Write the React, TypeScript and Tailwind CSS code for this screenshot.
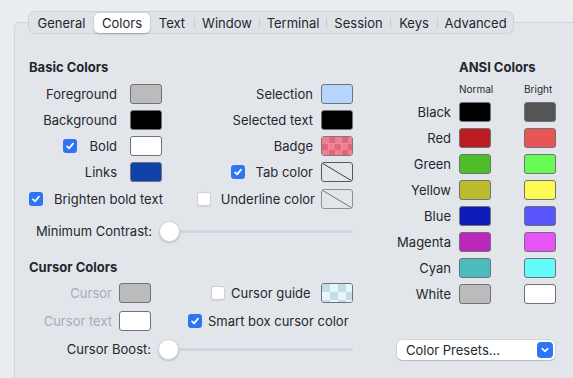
import React from "react";

const FONT = { fontFamily: "Inter, 'Noto Sans', sans-serif" };

function Check({ on }: { on: boolean }) {
  if (on) {
    return (
      <span className="flex h-[14px] w-[14px] shrink-0 items-center justify-center rounded-[3px] bg-[#2f74f2]">
        <svg width="10" height="10" viewBox="0 0 10 10">
          <path d="M2 5.3 L4.1 7.4 L8 2.6" fill="none" stroke="#fff" strokeWidth="1.7" strokeLinecap="round" strokeLinejoin="round" />
        </svg>
      </span>
    );
  }
  return <span className="h-[14px] w-[14px] shrink-0 rounded-[3px] border border-[#cdd1d7] bg-white shadow-[0_0.5px_1px_rgba(0,0,0,0.08)]" />;
}

function Swatch({ color, w = 32 }: { color: string; w?: number }) {
  return (
    <span
      className="block h-[20px] shrink-0 rounded-[3px] border border-[#6f7277]"
      style={{ backgroundColor: color, width: w }}
    />
  );
}

function Checker({ a, b, size, border }: { a: string; b: string; size: number; border: string }) {
  const cols = Math.ceil(32 / size);
  const rows = Math.ceil(20 / size);
  const cells: React.ReactNode[] = [];
  for (let r = 0; r < rows; r++)
    for (let c = 0; c < cols; c++)
      cells.push(<rect key={r + "-" + c} x={c * size} y={r * size} width={size} height={size} fill={(r + c) % 2 === 0 ? a : b} />);
  return (
    <span className={"block h-[20px] w-[32px] shrink-0 overflow-hidden rounded-[3px] border " + border}>
      <svg width="30" height="18" viewBox="0 0 30 18" className="block">
        {cells}
      </svg>
    </span>
  );
}

function NoneSwatch({ border, line }: { border: string; line: string }) {
  return (
    <span className={"block h-[20px] w-[32px] shrink-0 overflow-hidden rounded-[3px] border " + border}>
      <svg width="30" height="18" viewBox="0 0 30 18" className="block">
        <line x1="0" y1="0" x2="30" y2="18" stroke={line} strokeWidth="1" />
      </svg>
    </span>
  );
}

function Slider({ label, labelW }: { label: string; labelW: number }) {
  return (
    <div className="flex h-[26px] items-center">
      <span className="shrink-0 text-right" style={{ width: labelW }}>
        {label}
      </span>
      <div className="relative ml-[7px] h-[21px] flex-1">
        <div className="absolute left-[4px] right-0 top-[9px] h-[3px] rounded-full bg-[#cfd5df]" />
        <div className="absolute left-0 top-0 h-[21px] w-[21px] rounded-full border border-[#d3d6db] bg-white shadow-[0_1px_2px_rgba(0,0,0,0.2)]" />
      </div>
    </div>
  );
}

const tabs: { name: string; w: number; sel?: boolean; sep?: boolean }[] = [
  { name: "General", w: 65 },
  { name: "Colors", w: 56, sel: true },
  { name: "Text", w: 44, sep: true },
  { name: "Window", w: 64, sep: true },
  { name: "Terminal", w: 66, sep: true },
  { name: "Session", w: 63, sep: true },
  { name: "Keys", w: 46, sep: true },
  { name: "Advanced", w: 75 },
];

const ansi: [string, string, string][] = [
  ["Black", "#000000", "#555555"],
  ["Red", "#bb1b21", "#e85555"],
  ["Green", "#4fbd29", "#66fb55"],
  ["Yellow", "#bcbb2e", "#fffb55"],
  ["Blue", "#0d1cb9", "#5856fa"],
  ["Magenta", "#bc27bb", "#e755f6"],
  ["Cyan", "#4bbbbd", "#61fcf9"],
  ["White", "#bbbbbb", "#ffffff"],
];

export default function App() {
  return (
    <div className="h-[378px] w-[573px] overflow-hidden bg-[#eaedf0] pt-[12px] text-[13px] leading-[18px] text-[#24272d]" style={FONT}>
      <div className="relative z-10 ml-[29px] flex h-[21px] w-[484px] items-center rounded-[6px] bg-[#dfe3e8] ring-1 ring-[#cdd2d9]">
        {tabs.map((t) => (
          <React.Fragment key={t.name}>
            <div
              className={
                "flex h-[20px] items-center justify-center " +
                (t.sel ? "rounded-[5px] bg-white shadow-[0_0.5px_2px_rgba(0,0,0,0.25)]" : "")
              }
              style={{ width: t.w }}
            >
              {t.name}
            </div>
            {t.sep && <div className="h-[10px] w-px bg-[#c7ccd3]" />}
          </React.Fragment>
        ))}
      </div>

      <div className="-mt-[11px] ml-[14px] h-[400px] rounded-tl-[5px] border-l border-t border-[#d2d6dc] bg-[#e2e6eb] pl-[14px] pt-[35px]">
        <div className="flex gap-[38px]">
          {/* Left column */}
          <div className="w-[324px]">
            <div className="h-[18px] font-bold">Basic Colors</div>
            <div className="mt-[5px]">
              {[
                ["Foreground", "#bbbbbb", "Selection", "#b5d5ff"],
                ["Background", "#000000", "Selected text", "#000000"],
              ].map(([l1, c1, l2, c2]) => (
                <div key={l1} className="flex h-[26px] items-center">
                  <span className="w-[88px] text-right">{l1}</span>
                  <span className="ml-[13px]"><Swatch color={c1} /></span>
                  <span className="w-[151px] text-right">{l2}</span>
                  <span className="ml-[8px]"><Swatch color={c2} /></span>
                </div>
              ))}
              <div className="flex h-[26px] items-center">
                <span className="flex w-[88px] items-center justify-end gap-[13px]">
                  <Check on />
                  <span>Bold</span>
                </span>
                <span className="ml-[13px]"><Swatch color="#ffffff" /></span>
                <span className="w-[151px] text-right">Badge</span>
                <span className="ml-[8px]">
                  <Checker a="#ef8093" b="#e0677a" size={6.5} border="border-[#8a7478]" />
                </span>
              </div>
              <div className="flex h-[26px] items-center">
                <span className="w-[88px] text-right">Links</span>
                <span className="ml-[13px]"><Swatch color="#1142aa" /></span>
                <span className="flex w-[151px] items-center justify-end gap-[11px]">
                  <Check on />
                  <span>Tab color</span>
                </span>
                <span className="ml-[8px]">
                  <NoneSwatch border="border-[#55585d]" line="#3c3f44" />
                </span>
              </div>
              <div className="mt-[1px] flex h-[26px] items-center">
                <span className="flex flex-1 items-center gap-[11px]">
                  <Check on />
                  <span>Brighten bold text</span>
                </span>
                <span className="flex items-center gap-[10px]">
                  <Check on={false} />
                  <span>Underline color</span>
                </span>
                <span className="ml-[6px]">
                  <NoneSwatch border="border-[#8b8f96]" line="#6d7178" />
                </span>
              </div>
              <div className="mt-[6px]">
                <Slider label="Minimum Contrast:" labelW={123} />
              </div>
            </div>

            <div className="mt-[14px] h-[18px] font-bold">Cursor Colors</div>
            <div className="mt-[3px]">
              <div className="flex h-[28px] items-center">
                <span className="w-[83px] text-right text-[#a3acba]">Cursor</span>
                <span className="ml-[7px]"><Swatch color="#bbbbbb" /></span>
                <span className="ml-[60px] flex flex-1 items-center gap-[6px]">
                  <Check on={false} />
                  <span>Cursor guide</span>
                </span>
                <Checker a="#c7dce3" b="#e4f7fd" size={8} border="border-[#6f7277]" />
              </div>
              <div className="flex h-[28px] items-center">
                <span className="w-[83px] text-right text-[#a3acba]">Cursor text</span>
                <span className="ml-[7px]"><Swatch color="#ffffff" /></span>
                <span className="ml-[37px] flex items-center gap-[6px]">
                  <Check on />
                  <span>Smart box cursor color</span>
                </span>
              </div>
              <div className="mt-[1px]">
                <Slider label="Cursor Boost:" labelW={122} />
              </div>
            </div>
          </div>

          {/* Right column */}
          <div className="w-[165px]">
            <div className="ml-[68px] h-[18px] font-bold">ANSI Colors</div>
            <div className="flex h-[23px] items-center pt-[3px] text-[10px]">
              <span className="ml-[68px] w-[65px]">Normal</span>
              <span>Bright</span>
            </div>
            {ansi.map(([n, a, b]) => (
              <div key={n} className="flex h-[26px] items-center">
                <span className="w-[60px] text-right">{n}</span>
                <span className="ml-[8px]"><Swatch color={a} /></span>
                <span className="ml-[33px]"><Swatch color={b} /></span>
              </div>
            ))}
            <div className="ml-[6px] mt-[33px] flex h-[20px] w-[158px] items-center rounded-[5px] bg-white pl-[9px] pr-[2px] shadow-[0_0_0_0.5px_rgba(0,0,0,0.15),0_1px_1.5px_rgba(0,0,0,0.12)]">
              <span className="flex-1">Color Presets...</span>
              <span className="flex h-[16px] w-[16px] items-center justify-center rounded-[4px] bg-[#2f74f2]">
                <svg width="8" height="6" viewBox="0 0 8 6">
                  <path d="M1.2 1.6 L4 4.4 L6.8 1.6" fill="none" stroke="#fff" strokeWidth="1.5" strokeLinecap="round" strokeLinejoin="round" />
                </svg>
              </span>
            </div>
          </div>
        </div>
      </div>
    </div>
  );
}
